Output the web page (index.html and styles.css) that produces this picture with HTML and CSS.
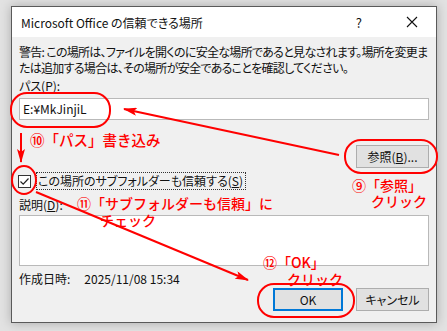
FILE: index.html
```html
<!DOCTYPE html>
<html lang="ja">
<head>
    <meta charset="UTF-8">
    <title>Microsoft Office の信頼できる場所</title>
    <link rel="stylesheet" href="styles.css">
</head>
<body>

    <div class="dialog">
        <div class="titlebar">
            <span class="title">Microsoft Office の信頼できる場所</span>
            <span class="help">?</span>
            <svg class="close" width="12" height="12" viewBox="0 0 12 12">
                <path d="M1 1 L11 11 M11 1 L1 11" stroke="#111" stroke-width="1.1" fill="none"/>
            </svg>
        </div>

        <div class="content">
            <p class="warning">警告: この場所は、ファイルを開くのに安全な場所であると見なされます。場所を変更ま<br>たは追加する場合は、その場所が安全であることを確認してください。</p>

            <div class="label">パス(<u>P</u>):</div>
            <div class="field">E:¥MkJinjiL</div>

            <div class="browse-row">
                <button class="btn browse">参照(<u>B</u>)...</button>
            </div>

            <div class="check-row">
                <span class="checkbox">
                    <svg width="11" height="11" viewBox="0 0 11 11">
                        <path d="M1.5 5.5 L4.2 8.2 L9.5 2.5" stroke="#222" stroke-width="1.2" fill="none"/>
                    </svg>
                </span>
                <span class="focus">この場所のサブフォルダーも信頼する(<u>S</u>)</span>
            </div>

            <div class="label desc">説明(<u>D</u>):</div>
            <div class="textarea"></div>

            <div class="created">
                <span>作成日時:</span>
                <span class="date">2025/11/08 15:34</span>
            </div>

            <div class="actions">
                <button class="btn ok">OK</button>
                <button class="btn cancel">キャンセル</button>
            </div>
        </div>
    </div>

    <!-- 赤い注釈 -->
    <svg class="marks" width="447" height="331" viewBox="0 0 447 331">
        <defs>
            <marker id="head" markerWidth="14" markerHeight="8" refX="13" refY="4" orient="auto" markerUnits="userSpaceOnUse">
                <path d="M0 0 L14 4 L0 8 L3 4 Z" fill="#ff0000"/>
            </marker>
        </defs>
        <g stroke="#ff0000" stroke-width="2" fill="none">
            <rect x="11" y="93" width="99" height="34" rx="16"/>
            <rect x="345" y="140" width="92" height="33" rx="16"/>
            <rect x="258" y="284" width="96" height="33" rx="16"/>
            <ellipse cx="24" cy="180" rx="12" ry="14"/>
            <line x1="339" y1="155" x2="124" y2="109" marker-end="url(#head)"/>
            <line x1="21" y1="133" x2="21" y2="162" marker-end="url(#head)"/>
            <line x1="36" y1="192" x2="248" y2="280" marker-end="url(#head)"/>
        </g>
    </svg>

    <div class="note n10">⑩「パス」書き込み</div>
    <div class="note n9">⑨「参照」<br><span class="sub">クリック</span></div>
    <div class="note n11">⑪「サブフォルダーも信頼」に<br><span class="sub">チェック</span></div>
    <div class="note n12">⑫「OK」<br><span class="sub">クリック</span></div>

</body>
</html>
```

FILE: styles.css
```css
body {
    margin: 0;
    width: 447px;
    height: 331px;
    overflow: hidden;
    background: #e2e2e2;
    font-family: "Noto Sans CJK JP", sans-serif;
    font-size: 12px;
    color: #111;
    font-feature-settings: "palt";
}
.dialog {
    box-sizing: border-box;
    width: 426px;
    height: 317px;
    margin: 6px 0 0 11px;
    border: 1px solid #5a5a5a;
    background: #f0f0f0;
    box-shadow: 0 0 10px rgba(0, 0, 0, 0.25);
    display: flex;
    flex-direction: column;
}
.titlebar {
    height: 30px;
    background: #fff;
    display: flex;
    align-items: center;
    padding-left: 9px;
}
.title {
    flex: 1;
    font-size: 12px;
}
.help {
    font-size: 13px;
    margin-right: 44px;
}
.close {
    margin-right: 18px;
}
.content {
    padding: 7px 7px 0 7px;
    display: flex;
    flex-direction: column;
}
.warning {
    margin: 0;
    line-height: 16px;
    white-space: nowrap;
    letter-spacing: -0.7px;
}
.label {
    margin-top: 2px;
    line-height: 16px;
}
.field {
    box-sizing: border-box;
    margin-top: 4px;
    height: 22px;
    background: #fff;
    border: 1px solid #b9b9b9;
    padding-left: 3px;
    line-height: 20px;
    font-size: 12px;
}
.browse-row {
    margin-top: 25px;
    display: flex;
    justify-content: flex-end;
}
.btn {
    box-sizing: border-box;
    height: 23px;
    background: #e1e1e1;
    border: 1px solid #adadad;
    font-family: inherit;
    font-size: 12px;
    font-feature-settings: "palt";
    color: #111;
    padding: 0;
}
.browse {
    width: 73px;
}
.check-row {
    margin-top: 4px;
    height: 18px;
    display: flex;
    align-items: center;
}
.checkbox {
    box-sizing: border-box;
    width: 13px;
    height: 13px;
    border: 1px solid #333;
    background: #fff;
    display: flex;
    align-items: center;
    justify-content: center;
    margin-left: -1px;
}
.focus {
    margin-left: 5px;
    border: 1px dotted #333;
    padding: 0 2px 0 1px;
    line-height: 16px;
}
.desc {
    margin-top: 7px;
}
.textarea {
    box-sizing: border-box;
    margin-top: 2px;
    height: 51px;
    background: #fff;
    border: 1px solid #b9b9b9;
}
.created {
    margin-top: 5px;
    line-height: 16px;
    display: flex;
}
.date {
    margin-left: 14px;
}
.actions {
    margin-top: 1px;
    display: flex;
    justify-content: flex-end;
    gap: 13px;
}
.ok {
    width: 70px;
    border: 2px solid #0078d7;
}
.cancel {
    width: 73px;
}
.marks {
    position: absolute;
    left: 0;
    top: 0;
}
.note {
    position: absolute;
    color: #ff0000;
    font-size: 14px;
    font-weight: 500;
    line-height: 16px;
    font-feature-settings: normal;
    white-space: nowrap;
}
.n10 {
    left: 30px;
    top: 132px;
    font-size: 14.5px;
}
.n9 {
    left: 352px;
    top: 177px;
}
.n9 .sub {
    margin-left: 19px;
}
.n11 {
    left: 77px;
    top: 195px;
}
.n11 .sub {
    margin-left: 23px;
    line-height: 18px;
}
.n12 {
    left: 263px;
    top: 254px;
}
.n12 .sub {
    margin-left: 24px;
    line-height: 18px;
}
```
